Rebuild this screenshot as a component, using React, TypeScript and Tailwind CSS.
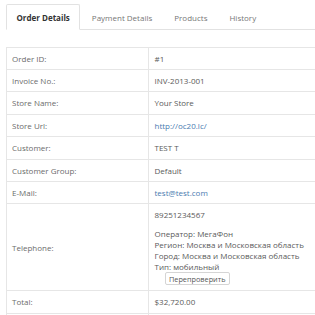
import React from "react";

const rows: { label: string; value: React.ReactNode }[] = [
  { label: "Order ID:", value: "#1" },
  { label: "Invoice No.:", value: "INV-2013-001" },
  { label: "Store Name:", value: "Your Store" },
  { label: "Store Url:", value: <a className="text-[#4a7bb0]">http://oc20.lc/</a> },
  { label: "Customer:", value: "TEST T" },
  { label: "Customer Group:", value: "Default" },
  { label: "E-Mail:", value: <a className="text-[#4a7bb0]">test@test.com</a> },
];

const App = () => {
  return (
    <div className="w-[315px] h-[315px] overflow-hidden bg-white font-['Open_Sans',sans-serif] text-[8px] text-[#6b6b6b]">
      <div className="pl-[6px] pt-[4px] w-[360px]">
        {/* Tabs */}
        <ul className="flex border-b border-[#e2e2e2]">
          {["Order Details", "Payment Details", "Products", "History"].map((tab, i) => (
            <li
              key={tab}
              className={`-mb-px mr-[1px] px-[9.5px] py-[6.5px] leading-[11px] border rounded-t-[2px] ${
                i === 0
                  ? "border-[#e2e2e2] border-b-white bg-white font-bold text-[#333]"
                  : "border-transparent text-[#777]"
              }`}
            >
              {tab}
            </li>
          ))}
        </ul>

        {/* Order info table */}
        <table className="mt-[16.5px] w-[354px] border-collapse border-l border-t border-[#e6e6e6]">
          <tbody>
            {rows.map((row) => (
              <tr key={row.label} className="border-b border-[#e6e6e6]">
                <td className="w-[142px] border-r border-[#e6e6e6] px-[5px] py-[5px] leading-[11.4px] align-middle">
                  {row.label}
                </td>
                <td className="px-[5.5px] py-[5px] leading-[11.4px] text-[#5a5a5a]">{row.value}</td>
              </tr>
            ))}
            <tr className="border-b border-[#e6e6e6]">
              <td className="border-r border-[#e6e6e6] px-[5px] py-[5px] leading-[11.4px] align-middle">
                Telephone:
              </td>
              <td className="px-[5.5px] pt-[5px] pb-[5.5px] leading-[11px] text-[#5a5a5a]">
                <p className="mb-[7.5px]">89251234567</p>
                <p>Оператор: МегаФон</p>
                <p>Регион: Москва и Московская область</p>
                <p>Город: Москва и Московская область</p>
                <p>Тип: мобильный</p>
                <button className="ml-[10px] mt-[0.5px] h-[12.5px] px-[3.5px] border border-[#d5d5d5] rounded-[2px] bg-white text-[7.3px] leading-[10px] text-[#555]">
                  Перепроверить
                </button>
              </td>
            </tr>
            <tr className="border-b border-[#e6e6e6]">
              <td className="border-r border-[#e6e6e6] px-[5px] py-[5px] leading-[11.4px]">Total:</td>
              <td className="px-[5.5px] py-[5px] leading-[11.4px] text-[#5a5a5a]">$32,720.00</td>
            </tr>
            <tr className="border-b border-[#e6e6e6]">
              <td className="border-r border-[#e6e6e6] px-[5px] py-[5px] leading-[11.4px]">&nbsp;</td>
              <td className="px-[5.5px] py-[5px] leading-[11.4px]">&nbsp;</td>
            </tr>
          </tbody>
        </table>
      </div>
    </div>
  );
};

export default App;
